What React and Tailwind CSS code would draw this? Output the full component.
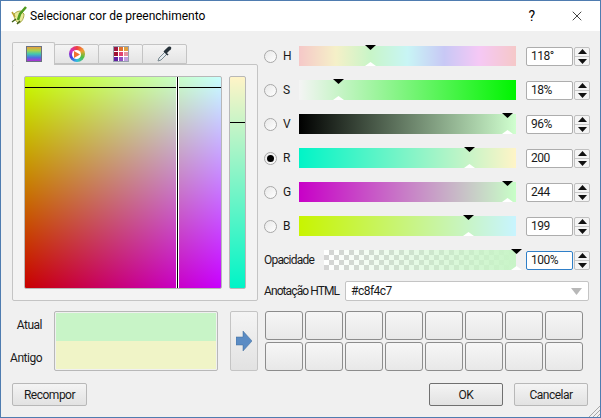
import { X } from "lucide-react";

const font = "font-['Roboto','Noto_Sans',sans-serif]";

const sliders = [
  { label: "H", value: 118, max: 359, text: "118°", bg: "bg-[linear-gradient(to_right,#f5c8c8,#f5f0c8_17%,#c8f5c8_33%,#c8f5f5_50%,#c8c8f5_67%,#f5c8f5_83%,#f5c8c8)]" },
  { label: "S", value: 18, max: 100, text: "18%", bg: "bg-[linear-gradient(to_right,#f4f4f4,#00f400)]" },
  { label: "V", value: 96, max: 100, text: "96%", bg: "bg-[linear-gradient(to_right,#000000,#d0ffcf)]" },
  { label: "R", value: 200, max: 255, text: "200", bg: "bg-[linear-gradient(to_right,#00f4c7,#fff4c7)]", checked: true },
  { label: "G", value: 244, max: 255, text: "244", bg: "bg-[linear-gradient(to_right,#c800c7,#c8ffc7)]" },
  { label: "B", value: 199, max: 255, text: "199", bg: "bg-[linear-gradient(to_right,#c8f400,#c8f4ff)]" },
];

function Logo() {
  return (
    <svg width="18" height="20" viewBox="0 0 18 20">
      <path d="M3 8 C3 13 5 16 8 17 C11 16 13 12 13 8 L10 5 C7 5 5 6 3 8 Z" fill="#e8eb9a" stroke="#a8a848" strokeWidth="1" />
      <path d="M15 1 L9 8 L7 14" fill="none" stroke="#4f9a1e" strokeWidth="2.5" />
      <path d="M1 16 L5 13 M6 18 L9 15" stroke="#3f5f1a" strokeWidth="1.5" />
      <path d="M1 6 L4 11" stroke="#b8a030" strokeWidth="1.5" />
    </svg>
  );
}

function GradientIcon() {
  return <div className="w-[16px] h-[16px] border border-gray-500 bg-[linear-gradient(to_bottom,#e8a040,#a8d050_25%,#40c8b0_50%,#5070e0_75%,#b030d0)]" />;
}

function WheelIcon() {
  return (
    <div className="w-[16px] h-[16px] rounded-full flex items-center justify-center bg-[conic-gradient(#f04040,#f0a030,#50c040,#30c0e0,#4040e0,#d030c0,#f04040)]">
      <div className="w-[9px] h-[9px] rounded-full bg-white flex items-center justify-center">
        <svg width="6" height="7" viewBox="0 0 6 7"><path d="M0 0 L6 3.5 L0 7 Z" fill="#f07030" /></svg>
      </div>
    </div>
  );
}

function SwatchIcon() {
  const colors = ["#a01840", "#e07030", "#e0a040", "#a01030", "#e04070", "#e890a0", "#6020a0", "#9050c0", "#c0a0e0"];
  return (
    <div className="grid grid-cols-3 gap-px w-[16px] h-[16px] bg-white border border-gray-400">
      {colors.map((c, i) => (
        <div key={i} style={{ background: c }} />
      ))}
    </div>
  );
}

function DropperIcon() {
  return (
    <svg width="16" height="16" viewBox="0 0 16 16">
      <path d="M1 15 L2 12 L8 6 L10 8 L4 14 Z" fill="#e4eaee" stroke="#788890" strokeWidth="1" />
      <path d="M7 5 L11 9 M9 7 L12 4 C15 2 13 0 11 2 L8 5 Z" fill="#27323a" stroke="#27323a" strokeWidth="1.5" />
    </svg>
  );
}

function Tab({ children, active }) {
  if (active) {
    return (
      <div className="relative z-10 w-[43px] h-[23px] -mb-px bg-[#f3f3f3] border border-[#c4c4c4] border-b-0 rounded-t-[2px] flex items-center justify-center">
        {children}
      </div>
    );
  }
  return (
    <div className="w-[45px] h-[20px] -ml-px border border-[#c4c4c4] rounded-t-[2px] bg-[linear-gradient(to_bottom,#f4f4f4,#e4e4e4)] flex items-center justify-center">
      {children}
    </div>
  );
}

function Radio({ checked }) {
  return (
    <div className="w-[13px] h-[13px] rounded-full border border-[#a8a8a8] bg-[linear-gradient(135deg,#e8e8e8,#ffffff)] flex items-center justify-center">
      {checked && <div className="w-[7px] h-[7px] rounded-full bg-black" />}
    </div>
  );
}

function Markers({ left }) {
  return (
    <>
      <svg width="11" height="5" viewBox="0 0 11 5" className="absolute -top-px -ml-[5px]" style={{ left }}>
        <path d="M0 0 H11 L5.5 5 Z" fill="#000" />
      </svg>
      <svg width="11" height="4" viewBox="0 0 11 4" className="absolute bottom-0 -ml-[5px]" style={{ left }}>
        <path d="M0 4 H11 L5.5 0 Z" fill="#fff" />
      </svg>
    </>
  );
}

function Spin({ text, focus }) {
  return (
    <div className="flex items-center ml-[10px]">
      <div className={"w-[47px] h-[19px] bg-white rounded-[2px] pl-[4px] flex items-center border " + (focus ? "border-[#2f7fc8]" : "border-[#adadad]")}>
        {text}
      </div>
      <div className="w-[16px] h-[19px] flex flex-col items-center justify-center gap-[2px] ml-px border border-[#c0c0c0] rounded-[2px] bg-[#f4f4f4]">
        <svg width="9" height="5" viewBox="0 0 9 5"><path d="M0 5 L4.5 0 L9 5 Z" fill="#111" /></svg>
        <div className="w-full h-px bg-[#c8c8c8]" />
        <svg width="9" height="5" viewBox="0 0 9 5"><path d="M0 0 L4.5 5 L9 0 Z" fill="#111" /></svg>
      </div>
    </div>
  );
}

function Button({ children, dark, className }) {
  return (
    <div className={"h-[23px] rounded-[2px] border flex items-center justify-center bg-[linear-gradient(to_bottom,#f4f4f4,#e2e2e2)] " + (dark ? "border-[#707070] " : "border-[#b8b8b8] ") + (className || "")}>
      {children}
    </div>
  );
}

export default function App() {
  return (
    <div className={"relative w-[601px] h-[418px] bg-[#f0f0f0] border border-[#4f7cb0] flex flex-col text-[12px] leading-none tracking-[-0.5px] text-[#1a1a1a] overflow-hidden " + font}>
      {/* title bar */}
      <div className="h-[30px] bg-white flex items-center pl-[10px] shrink-0 tracking-normal">
        <Logo />
        <span className="ml-px text-[12px] text-black">Selecionar cor de preenchimento</span>
        <span className="ml-auto mr-[34px] text-[14px] text-black">?</span>
        <X size={16} strokeWidth={1.1} className="mr-[15px] text-black" />
      </div>

      {/* main */}
      <div className="flex mt-[11px] pl-[11px]">
        <div className="w-[246px] shrink-0 flex flex-col">
          <div className="flex items-end">
            <Tab active><GradientIcon /></Tab>
            <Tab><WheelIcon /></Tab>
            <Tab><SwatchIcon /></Tab>
            <Tab><DropperIcon /></Tab>
          </div>
          <div className="h-[237px] border border-[#c4c4c4] rounded-[2px] bg-[#f3f3f3] flex gap-[7px] pl-[11px] pt-[11px]">
            <div className="relative w-[198px] h-[213px] border border-[#b8b8b8] rounded-[2px] bg-[linear-gradient(to_bottom,#00ff00,#000000),linear-gradient(to_right,#c80000,#c800ff)] bg-blend-screen overflow-hidden">
              <div className="absolute left-0 right-0 top-[10px] h-px bg-black" />
              <div className="absolute top-0 bottom-0 left-[151px] w-[3px] border-x border-white bg-black bg-clip-padding" />
            </div>
            <div className="relative w-[17px] h-[213px] border border-[#b8b8b8] rounded-[2px] bg-[linear-gradient(to_bottom,#fff4c7,#00f4c7)]">
              <div className="absolute left-0 right-0 top-[45px] h-px bg-black" />
            </div>
          </div>
        </div>

        <div className="ml-[6px] flex-1 flex flex-col pt-[4px]">
          {sliders.map((s) => (
            <div key={s.label} className="flex items-center h-[20px] mb-[14px]">
              <Radio checked={s.checked} />
              <span className="w-[22px] pl-[6px]">{s.label}</span>
              <div className={"relative w-[217px] h-[20px] " + s.bg}>
                <Markers left={(s.value / s.max) * 217} />
              </div>
              <Spin text={s.text} />
            </div>
          ))}
          <div className="flex items-center h-[20px]">
            <span className="w-[60px] tracking-[-0.8px]">Opacidade</span>
            <div className="relative w-[192px] h-[20px] bg-[conic-gradient(#d4d4d4_25%,#ffffff_0_50%,#d4d4d4_0_75%,#ffffff_0)] bg-[length:10px_10px]">
              <div className="absolute inset-0 bg-[linear-gradient(to_right,transparent,#c8f4c7)]" />
              <Markers left={192} />
            </div>
            <Spin text="100%" focus />
          </div>
          <div className="flex items-center h-[20px] mt-[11px]">
            <span className="w-[81px] whitespace-nowrap tracking-[-0.9px]">Anotação HTML</span>
            <div className="w-[244px] h-[20px] bg-white border border-[#c4c4c4] rounded-[2px] flex items-center pl-[5px] pr-[6px] justify-between">
              #c8f4c7
              <svg width="11" height="7" viewBox="0 0 11 7"><path d="M0 0 H11 L5.5 7 Z" fill="#b8b8b8" /></svg>
            </div>
          </div>
        </div>
      </div>

      {/* history + swatches */}
      <div className="flex mt-[10px] pl-[11px]">
        <div className="w-[30px] h-[60px] flex flex-col justify-between items-end pt-[8px] pb-[7px]">
          <span>Atual</span>
          <span>Antigo</span>
        </div>
        <div className="w-[164px] h-[60px] ml-[12px] border border-[#b8b8b8] rounded-[2px] p-px flex flex-col">
          <div className="flex-1 bg-[#c8f4c7]" />
          <div className="flex-1 bg-[#f0f4c7]" />
        </div>
        <div className="w-[28px] h-[60px] ml-[12px] border border-[#c4c4c4] rounded-[2px] bg-[linear-gradient(to_bottom,#f4f4f4,#e2e2e2)] flex items-center justify-center">
          <svg width="16" height="20" viewBox="0 0 16 20">
            <path d="M0 6 H7 V0 L16 10 L7 20 V14 H0 Z" fill="#5b8cc4" stroke="#3f6a9a" strokeWidth="0.5" />
          </svg>
        </div>
        <div className="ml-[7px] grid grid-cols-[repeat(8,38px)] gap-x-[2px] gap-y-px">
          {Array.from({ length: 16 }).map((_, i) => (
            <div key={i} className="h-[29px] border border-[#8c8c8c] rounded-[3px] bg-[linear-gradient(to_bottom,#f6f6f6,#e8e8e8)]" />
          ))}
        </div>
      </div>

      {/* buttons */}
      <div className="flex mt-[12px] pl-[11px] pr-[12px]">
        <Button className="w-[75px]">Recompor</Button>
        <Button dark className="w-[74px] ml-auto">OK</Button>
        <Button className="w-[74px] ml-[11px]">Cancelar</Button>
      </div>

      {/* resize grip */}
      <svg width="12" height="12" viewBox="0 0 12 12" className="absolute right-0 bottom-0">
        <path d="M12 1 L1 12 M12 5 L5 12 M12 9 L9 12" stroke="#a8a8a8" strokeWidth="1" />
      </svg>
    </div>
  );
}
